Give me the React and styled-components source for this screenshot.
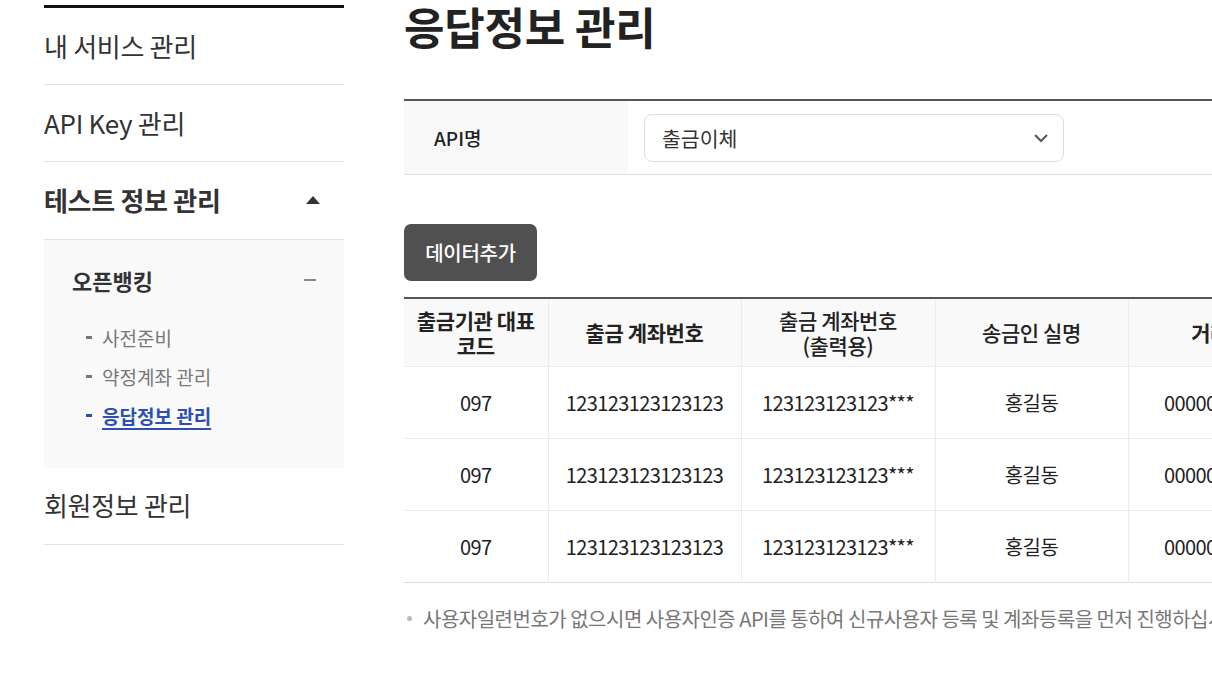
import React from 'react'
import styled, { createGlobalStyle } from 'styled-components'

const GlobalStyle = createGlobalStyle`
  html, body {
    margin: 0;
    padding: 0;
    background: #fff;
    overflow: hidden;
  }
  body {
    font-family: "Noto Sans CJK KR", "Noto Sans", sans-serif;
    color: #222;
  }
`

const Page = styled.div`
  display: flex;
  align-items: flex-start;
  gap: 60px;
  padding-left: 44px;
  width: 1212px;
  height: 700px;
  overflow: hidden;
  box-sizing: border-box;
`

const Sidebar = styled.nav`
  flex: 0 0 300px;
  margin-top: 5px;
  border-top: 3px solid #111;
`

const MenuItem = styled.div`
  display: flex;
  align-items: center;
  justify-content: space-between;
  height: ${p => (p.$open ? 78 : 77)}px;
  padding-bottom: 2px;
  box-sizing: border-box;
  border-bottom: 1px solid #e2e2e2;
  font-size: 26px;
  font-weight: ${p => (p.$open ? 700 : 400)};
  color: #333;
  letter-spacing: -0.3px;
`

const Caret = styled.span`
  width: 0;
  height: 0;
  margin-right: 24px;
  border-left: 7px solid transparent;
  border-right: 7px solid transparent;
  border-bottom: 8px solid #333;
`

const SubBox = styled.div`
  background: #f9f9f9;
  padding: 24px 0 33px 28px;
`

const SubHead = styled.div`
  display: flex;
  align-items: center;
  justify-content: space-between;
  font-size: 22px;
  font-weight: 700;
  color: #333;
  margin-bottom: 22px;
`

const Minus = styled.span`
  width: 12px;
  height: 2px;
  background: #888;
  margin-right: 28px;
`

const SubList = styled.ul`
  list-style: none;
  margin: 0;
  padding: 0 0 0 14px;
`

const SubLink = styled.li`
  display: flex;
  align-items: center;
  gap: 10px;
  height: 39px;
  font-size: 19px;
  color: ${p => (p.$active ? '#2d4fb0' : '#777')};
  font-weight: ${p => (p.$active ? 700 : 400)};

  &::before {
    content: '';
    width: 6px;
    height: 3px;
    background: currentColor;
  }

  span {
    text-decoration: ${p => (p.$active ? 'underline' : 'none')};
    text-underline-offset: 4px;
    text-decoration-thickness: 2px;
  }
`

const LastItem = styled(MenuItem)`
  height: 77px;
  padding-bottom: 4px;
`

const Main = styled.main`
  flex: 0 0 auto;
  width: 1000px;
`

const Title = styled.h1`
  margin: -5px 0 0;
  font-size: 44px;
  font-weight: 700;
  color: #222;
  letter-spacing: -0.2px;
  line-height: 62px;
`

const FilterTable = styled.div`
  display: flex;
  margin-top: 42px;
  border-top: 2px solid #555;
  border-bottom: 1px solid #ddd;
  height: 73px;
`

const FilterLabel = styled.div`
  display: flex;
  align-items: center;
  width: 224px;
  padding-left: 30px;
  box-sizing: border-box;
  background: #f9f9f9;
  font-size: 19px;
  font-weight: 500;
  color: #222;
`

const FilterValue = styled.div`
  display: flex;
  align-items: center;
  padding-left: 16px;
`

const Select = styled.div`
  display: flex;
  align-items: center;
  justify-content: space-between;
  width: 420px;
  height: 48px;
  box-sizing: border-box;
  padding: 0 14px 0 17px;
  border: 1px solid #ddd;
  border-radius: 8px;
  font-size: 20.5px;
  color: #333;
`

const AddButton = styled.button`
  display: block;
  margin-top: 49px;
  width: 133px;
  height: 57px;
  border: 0;
  border-radius: 7px;
  background: #505050;
  color: #fff;
  font-family: inherit;
  font-size: 20px;
  font-weight: 500;
  letter-spacing: -0.3px;
`

const Table = styled.table`
  margin-top: 16px;
  width: 1200px;
  border-collapse: collapse;
  table-layout: fixed;
  border-top: 2px solid #555;
  border-bottom: 1px solid #ddd;
`

const Th = styled.th`
  height: 67px;
  padding: 0 8px;
  background: #f9f9f9;
  border-left: 1px solid #eaeaea;
  font-size: 21px;
  font-weight: ${p => (p.$light ? 500 : 700)};
  line-height: 25px;
  color: #222;
  letter-spacing: -0.4px;
  &:first-child { border-left: 0; }
`

const Td = styled.td`
  height: 71px;
  padding: 0;
  text-align: center;
  border-left: 1px solid #eaeaea;
  border-top: 1px solid #eaeaea;
  font-size: 20px;
  color: #222;
  letter-spacing: -0.6px;
  &:first-child { border-left: 0; }
`

const Note = styled.p`
  display: flex;
  align-items: center;
  gap: 11px;
  margin: 21px 0 0 3px;
  font-size: 20px;
  color: #777;
  white-space: nowrap;
  letter-spacing: -0.5px;

  &::before {
    content: '';
    width: 5px;
    height: 5px;
    border-radius: 50%;
    background: #bbb;
  }
`

const rows = [1, 2, 3].map(() => ({
  code: '097',
  acct: '123123123123123',
  masked: '123123123123***',
  name: '홍길동',
  tx: '0000000000000000',
}))

const Chevron = () => (
  <svg width="16" height="10" viewBox="0 0 16 10">
    <path d="M2 2 L8 8 L14 2" fill="none" stroke="#555" strokeWidth="2" />
  </svg>
)

export default function App() {
  return (
    <>
      <GlobalStyle />
      <Page>
        <Sidebar>
          <MenuItem>내 서비스 관리</MenuItem>
          <MenuItem>API Key 관리</MenuItem>
          <MenuItem $open>
            테스트 정보 관리
            <Caret />
          </MenuItem>
          <SubBox>
            <SubHead>
              오픈뱅킹
              <Minus />
            </SubHead>
            <SubList>
              <SubLink><span>사전준비</span></SubLink>
              <SubLink><span>약정계좌 관리</span></SubLink>
              <SubLink $active><span>응답정보 관리</span></SubLink>
            </SubList>
          </SubBox>
          <LastItem>회원정보 관리</LastItem>
        </Sidebar>
        <Main>
          <Title>응답정보 관리</Title>
          <FilterTable>
            <FilterLabel>API명</FilterLabel>
            <FilterValue>
              <Select>
                출금이체
                <Chevron />
              </Select>
            </FilterValue>
          </FilterTable>
          <AddButton>데이터추가</AddButton>
          <Table>
            <colgroup>
              <col style={{ width: 144 }} />
              <col style={{ width: 193 }} />
              <col style={{ width: 194 }} />
              <col style={{ width: 193 }} />
              <col style={{ width: 240 }} />
              <col style={{ width: 236 }} />
            </colgroup>
            <thead>
              <tr>
                <Th>출금기관 대표 코드</Th>
                <Th>출금 계좌번호</Th>
                <Th $light>출금 계좌번호<br />(출력용)</Th>
                <Th $light>송금인 실명</Th>
                <Th>거래고유번호</Th>
                <Th>비고</Th>
              </tr>
            </thead>
            <tbody>
              {rows.map((r, i) => (
                <tr key={i}>
                  <Td>{r.code}</Td>
                  <Td>{r.acct}</Td>
                  <Td>{r.masked}</Td>
                  <Td>{r.name}</Td>
                  <Td>{r.tx}</Td>
                  <Td>-</Td>
                </tr>
              ))}
            </tbody>
          </Table>
          <Note>사용자일련번호가 없으시면 사용자인증 API를 통하여 신규사용자 등록 및 계좌등록을 먼저 진행하십시오.</Note>
        </Main>
      </Page>
    </>
  )
}
